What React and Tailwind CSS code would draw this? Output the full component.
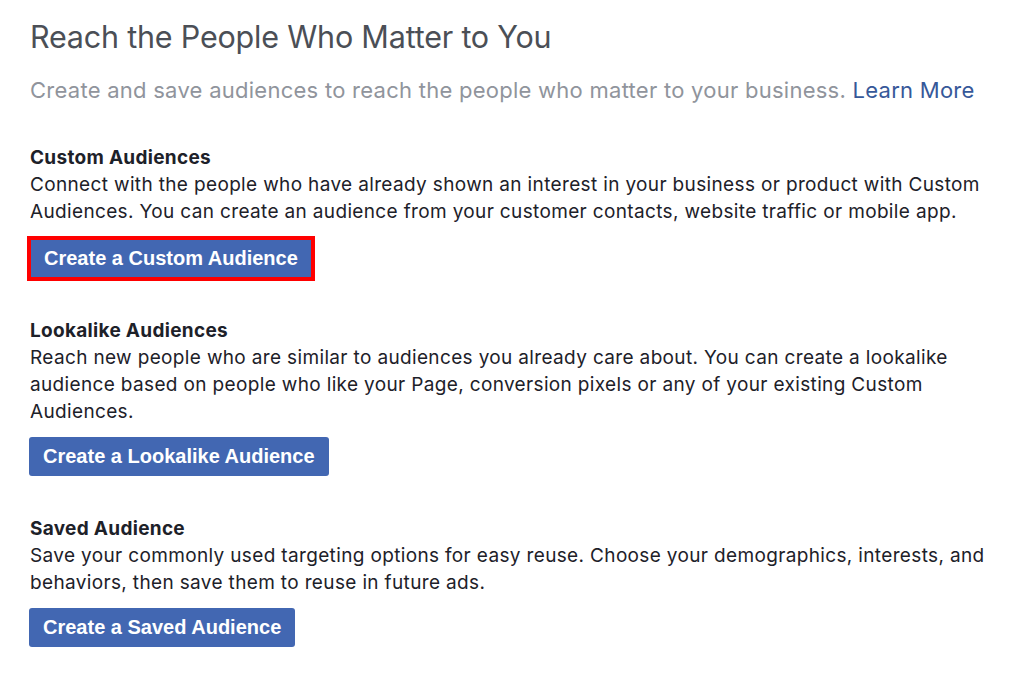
const sections = [
  {
    title: "Custom Audiences",
    text: "Connect with the people who have already shown an interest in your business or product with Custom Audiences. You can create an audience from your customer contacts, website traffic or mobile app.",
    button: "Create a Custom Audience",
    highlight: true,
  },
  {
    title: "Lookalike Audiences",
    text: "Reach new people who are similar to audiences you already care about. You can create a lookalike audience based on people who like your Page, conversion pixels or any of your existing Custom Audiences.",
    button: "Create a Lookalike Audience",
  },
  {
    title: "Saved Audience",
    text: "Save your commonly used targeting options for easy reuse. Choose your demographics, interests, and behaviors, then save them to reuse in future ads.",
    button: "Create a Saved Audience",
  },
];

export default function App() {
  return (
    <div className="min-h-screen bg-white pl-[30px] pr-[30px] pt-[18px] font-['Inter','Liberation_Sans',sans-serif]">
      <h1 className="text-[30.5px] leading-[38px] text-[#4b4f56] tracking-[-0.2px]">
        Reach the People Who Matter to You
      </h1>
      <p className="mt-[19px] text-[22px] leading-[30px] tracking-[0.26px] text-[#90949c]">
        Create and save audiences to reach the people who matter to your business.{" "}
        <a href="#" className="text-[#365899]">Learn More</a>
      </p>

      <div className="mt-[39px] flex flex-col gap-[39px]">
        {sections.map((s) => (
          <div key={s.title} className="text-[19px] leading-[27px] tracking-[0.35px] text-[#1d2129]">
            <h2 className="font-bold tracking-[0.3px]">{s.title}</h2>
            <p>{s.text}</p>
            <div className="mt-[12px] font-['Liberation_Sans',sans-serif] tracking-normal">
              {s.highlight ? (
                <div className="inline-block border-4 border-[#ff0000] -ml-[3px] -mt-[1px] -mb-[3px]">
                  <button className="block h-[37px] bg-[#4267b2] px-[13px] text-[20px] font-bold text-white">
                    {s.button}
                  </button>
                </div>
              ) : (
                <button className="-ml-px h-[39px] rounded-[3px] bg-[#4267b2] px-[14px] text-[20px] font-bold text-white">
                  {s.button}
                </button>
              )}
            </div>
          </div>
        ))}
      </div>
    </div>
  );
}
